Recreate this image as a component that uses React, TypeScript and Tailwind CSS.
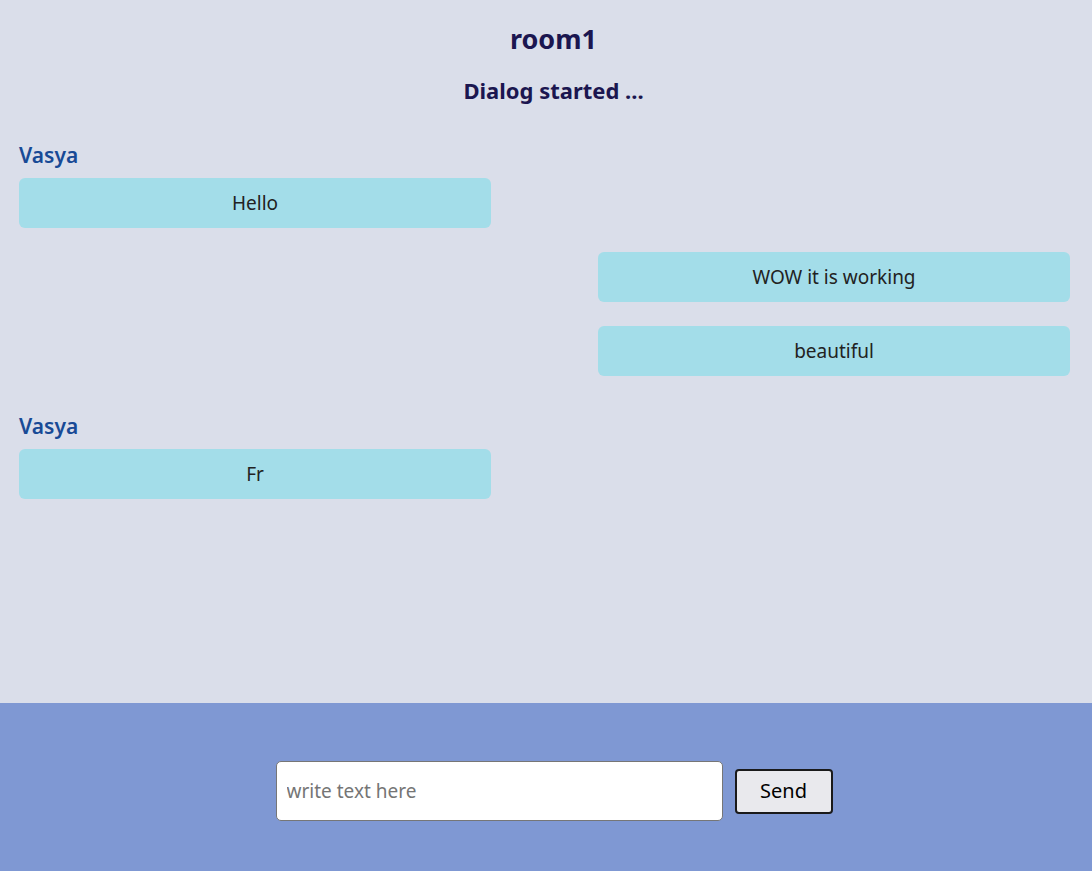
import React, { useState } from 'react';

interface Message {
  id: number;
  author: string;
  text: string;
  mine: boolean;
}

const messages: Message[] = [
  { id: 1, author: 'Vasya', text: 'Hello', mine: false },
  { id: 2, author: 'me', text: 'WOW it is working', mine: true },
  { id: 3, author: 'me', text: 'beautiful', mine: true },
  { id: 4, author: 'Vasya', text: 'Fr', mine: false },
];

const font = { fontFamily: '"Noto Sans", "Open Sans", sans-serif' };

export default function App() {
  const [text, setText] = useState('');

  return (
    <div className="flex h-screen flex-col bg-[#dadeea]" style={font}>
      {/* чат */}
      <div className="flex-1 overflow-hidden pl-[19px] pr-[22px]">
        <h1 className="mt-[19px] pl-[18px] text-center text-[27px] font-bold leading-[40px] text-[#1b1650]">room1</h1>
        <h2 className="mt-[17px] pl-[18px] text-center text-[22px] font-bold leading-[28px] text-[#1b1650]">Dialog started ...</h2>

        <div className="mt-[38px] flex flex-col">
          {messages.map((m, i) => {
            const showName = !m.mine && (i === 0 || messages[i - 1].author !== m.author);
            return (
              <div key={m.id} className={`flex flex-col ${m.mine ? 'items-end' : 'items-start'} ${i > 0 ? (showName ? 'mt-[37px]' : 'mt-[24px]') : ''}`}>
                {showName && (
                  <div className="mb-[10px] text-[21px] font-semibold leading-[26px] text-[#184a96]">{m.author}</div>
                )}
                <div className="flex h-[50px] w-[472px] items-center justify-center rounded-[6px] bg-[#a3dde9] text-[19px] text-[#222]">
                  {m.text}
                </div>
              </div>
            );
          })}
        </div>
      </div>

      {/* ввод */}
      <div className="flex h-[168px] items-center justify-center gap-[12px] bg-[#7f98d3] pl-[16px] pt-[8px]">
        <input
          value={text}
          onChange={(e) => setText(e.target.value)}
          placeholder="write text here"
          className="h-[60px] w-[447px] rounded-[5px] border border-[#767676] bg-white px-[10px] text-[19px] text-[#222] placeholder:text-[#757575] outline-none"
          style={font}
        />
        <button
          className="h-[45px] w-[98px] rounded-[4px] border-2 border-[#1a1a1a] bg-[#e9e9ed] text-[20px] text-black"
          style={font}
        >
          Send
        </button>
      </div>
    </div>
  );
}
